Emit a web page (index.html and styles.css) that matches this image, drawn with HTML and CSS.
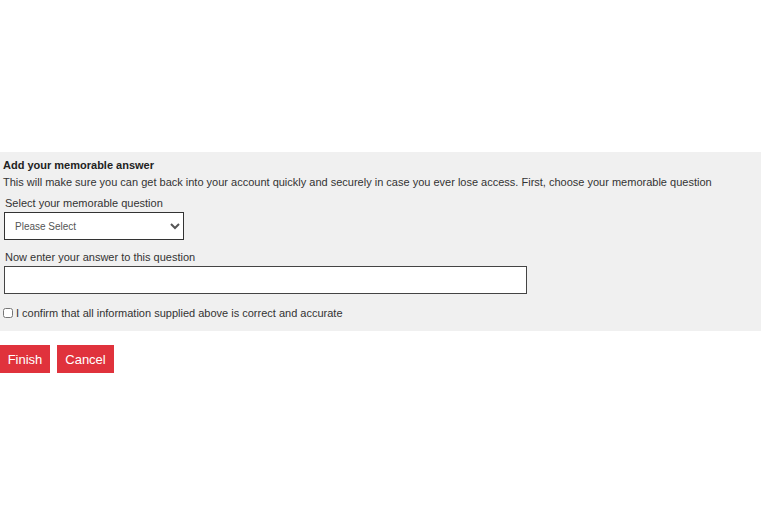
FILE: index.html
```html
<!DOCTYPE html>
<html lang="en">
<head>
<meta charset="utf-8">
<title>Add your memorable answer</title>
<link rel="stylesheet" href="styles.css">
</head>
<body>
<main class="page">
  <form class="form">
    <section class="panel">
      <h2 class="title">Add your memorable answer</h2>
      <p class="intro">This will make sure you can get back into your account quickly and securely in case you ever lose access. First, choose your memorable question</p>
      <label class="label" for="question">Select your memorable question</label>
      <select class="select" id="question">
        <option>Please Select</option>
      </select>
      <label class="label label-answer" for="answer">Now enter your answer to this question</label>
      <input class="input" id="answer" type="text">
      <label class="confirm"><input class="checkbox" type="checkbox"> I confirm that all information supplied above is correct and accurate</label>
    </section>
    <div class="actions">
      <button class="btn btn-finish" type="button">Finish</button>
      <button class="btn btn-cancel" type="button">Cancel</button>
    </div>
  </form>
</main>
</body>
</html>
```
FILE: styles.css
```css
html, body {
  margin: 0;
  padding: 0;
  background: #ffffff;
}
body {
  font-family: "Liberation Sans", Arial, sans-serif;
  font-size: 11px;
  color: #333333;
}
.page {
  padding-top: 152px;
}
.panel {
  width: 761px;
  box-sizing: border-box;
  background: #f0f0f0;
  padding: 6px 3px 11px 3px;
  display: flex;
  flex-direction: column;
  align-items: flex-start;
}
.title {
  margin: 0;
  font-size: 11px;
  line-height: 14px;
  font-weight: bold;
  color: #222222;
}
.intro {
  margin: 3px 0 0 0;
  line-height: 14px;
}
.label {
  display: block;
  margin: 7px 0 0 2px;
  line-height: 14px;
}
.label-answer {
  margin-top: 10px;
}
.select {
  margin: 2px 0 0 1px;
  width: 180px;
  height: 28px;
  box-sizing: border-box;
  border: 1px solid #333333;
  border-radius: 0;
  background: #ffffff;
  font-family: "Liberation Sans", Arial, sans-serif;
  font-size: 10px;
  color: #555555;
  padding: 0 6px;
}
.input {
  margin: 2px 0 0 1px;
  width: 523px;
  height: 28px;
  box-sizing: border-box;
  border: 1px solid #444444;
  border-radius: 0;
  background: #ffffff;
  padding: 0 4px;
  font-family: "Liberation Sans", Arial, sans-serif;
  font-size: 12px;
}
.confirm {
  display: flex;
  align-items: center;
  margin: 12px 0 0 0;
  line-height: 14px;
}
.checkbox {
  width: 10px;
  height: 10px;
  margin: 0 3px 0 0;
}
.actions {
  display: flex;
  gap: 7px;
  margin-top: 14px;
}
.btn {
  height: 28px;
  border: none;
  border-radius: 0;
  background: #e0323c;
  color: #ffffff;
  font-family: "Liberation Sans", Arial, sans-serif;
  font-size: 13px;
  cursor: pointer;
}
.btn-finish {
  width: 50px;
  padding: 0;
}
.btn-cancel {
  width: 57px;
  padding: 0;
}
```
